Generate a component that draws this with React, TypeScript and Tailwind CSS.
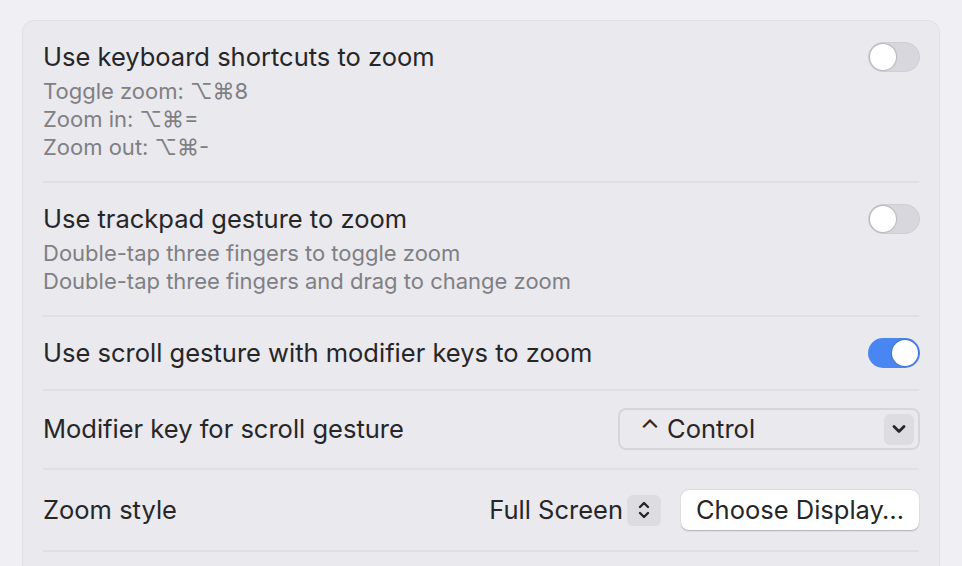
import React from 'react';

const font = { fontFamily: 'Inter, "Noto Sans", sans-serif' };

const Toggle: React.FC<{ on?: boolean }> = ({ on }) => (
  <div
    className={
      on
        ? 'flex h-[30px] w-[52px] items-center justify-end rounded-full bg-[#4a86f2] p-[2px]'
        : 'flex h-[30px] w-[52px] items-center justify-start rounded-full border border-[#cfced4] bg-[#d8d7dd] p-[1px]'
    }
  >
    <div className="h-[26px] w-[26px] rounded-full bg-white shadow-[0_0_1px_1px_rgba(0,0,0,0.15)]" />
  </div>
);

const Row: React.FC<{ title: string; subs: string[] }> = ({ title, subs }) => (
  <div className="flex items-start justify-between border-b-2 border-[#dfdfe4] py-5">
    <div>
      <div className="text-[25.5px] leading-8 text-[#262628]">{title}</div>
      <div className="mt-1 text-[22px] leading-7 text-[#7f7f84]">
        {subs.map((s) => (
          <div key={s}>{s}</div>
        ))}
      </div>
    </div>
    <div className="mr-[-1px] mt-[1px]">
      <Toggle />
    </div>
  </div>
);

export default function App() {
  return (
    <div className="h-[566px] w-[962px] overflow-hidden bg-[#efeff4] px-[22px] pt-5" style={font}>
      <div className="rounded-t-xl border border-[#e0e0e5] bg-[#e9e9ee] px-5">
        <Row title="Use keyboard shortcuts to zoom" subs={['Toggle zoom: ⌥⌘8', 'Zoom in: ⌥⌘=', 'Zoom out: ⌥⌘-']} />
        <Row
          title="Use trackpad gesture to zoom"
          subs={['Double-tap three fingers to toggle zoom', 'Double-tap three fingers and drag to change zoom']}
        />
        <div className="flex h-[74px] items-center justify-between border-b-2 border-[#dfdfe4]">
          <div className="text-[25.5px] leading-8 text-[#262628]">Use scroll gesture with modifier keys to zoom</div>
          <div className="mr-[-1px]">
            <Toggle on />
          </div>
        </div>
        <div className="flex h-[79px] items-center justify-between border-b-2 border-[#dfdfe4] pb-[1px]">
          <div className="text-[25.5px] leading-8 text-[#262628]">Modifier key for scroll gesture</div>
          <div className="mr-[-1px] flex h-[42px] w-[302px] items-center justify-between rounded-lg border-2 border-[#d6d6db] pl-5 pr-[4px]">
            <span className="text-[25.5px] leading-8 text-[#262628]">⌃ Control</span>
            <div className="flex h-[31px] w-[30px] items-center justify-center rounded-md bg-[#dcdce1]">
              <svg width="16" height="16" viewBox="0 0 16 16" fill="none" stroke="#262628" strokeWidth="2.8" strokeLinecap="round" strokeLinejoin="round">
                <path d="M3 5.5l5 5 5-5" />
              </svg>
            </div>
          </div>
        </div>
        <div className="flex h-[82px] items-center justify-between border-b-2 border-[#dfdfe4]">
          <div className="text-[25.5px] leading-8 text-[#262628]">Zoom style</div>
          <div className="flex items-center">
            <span className="text-[25.5px] leading-8 text-[#262628]">Full Screen</span>
            <div className="ml-1 flex h-[31px] w-[34px] items-center justify-center rounded-md bg-[#dcdce1]">
              <svg width="16" height="22" viewBox="0 0 16 22" fill="none" stroke="#262628" strokeWidth="2.4" strokeLinecap="round" strokeLinejoin="round">
                <path d="M4 8l4-4 4 4" />
                <path d="M4 14l4 4 4-4" />
              </svg>
            </div>
            <div className="ml-5 flex h-[40px] w-[238px] items-center justify-center rounded-lg bg-white text-[25.5px] leading-8 text-[#262628] shadow-[0_0.5px_1.5px_rgba(0,0,0,0.25)]">
              Choose Display…
            </div>
          </div>
        </div>
        <div className="h-10" />
      </div>
    </div>
  );
}
